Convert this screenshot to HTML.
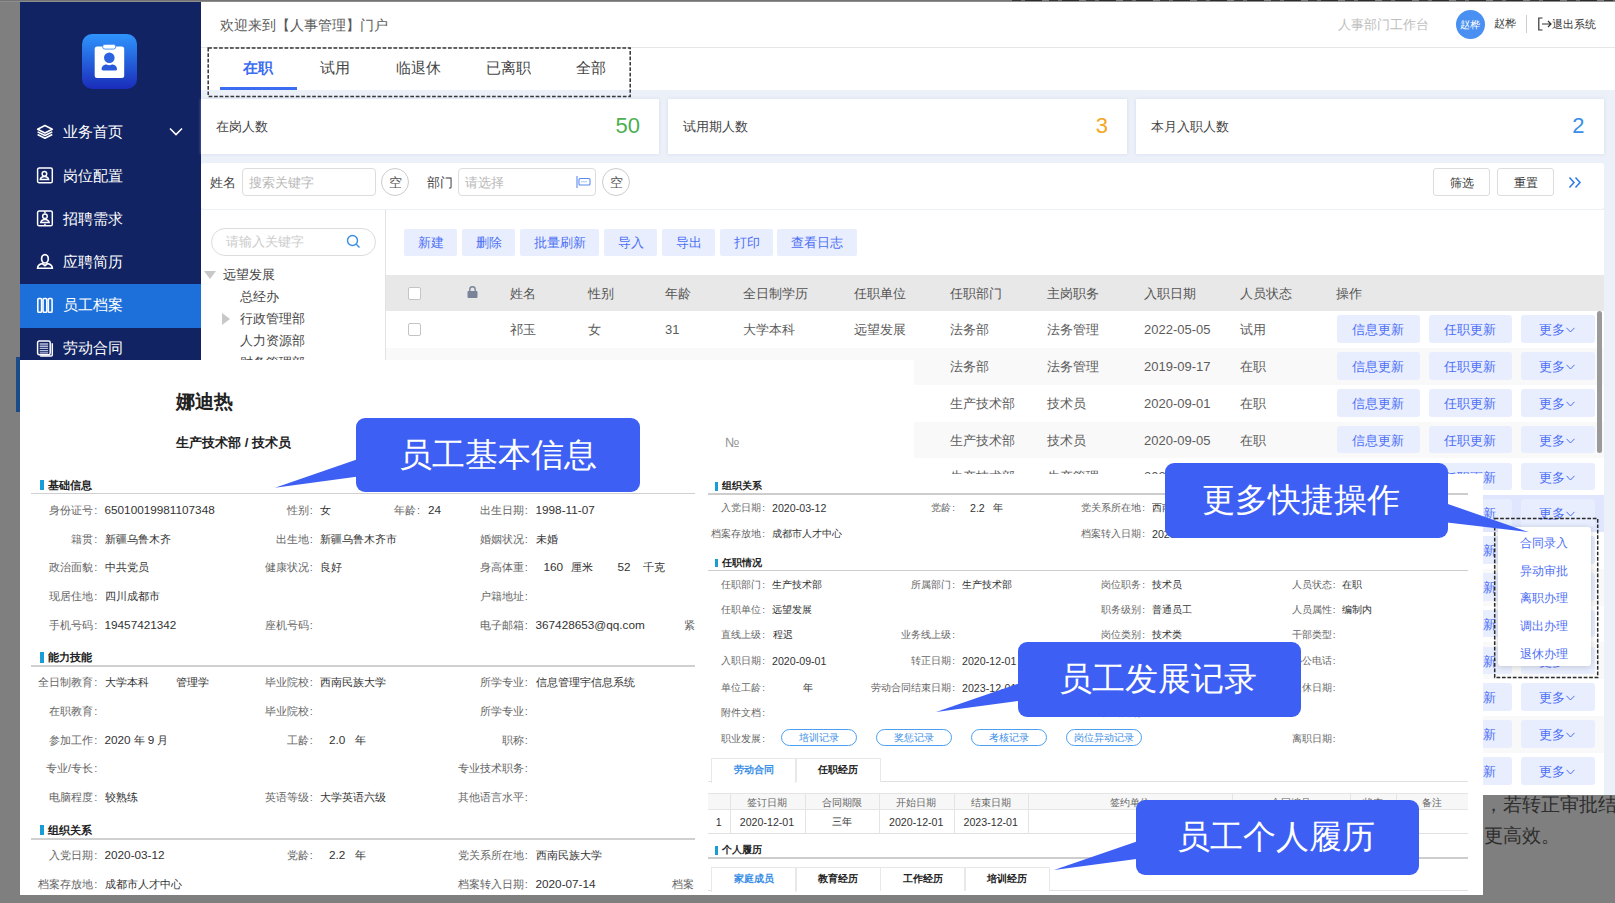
<!DOCTYPE html>
<html><head><meta charset="utf-8"><title>HR</title>
<style>
*{box-sizing:border-box;margin:0;padding:0}
html,body{width:1615px;height:903px;overflow:hidden;background:#7f7f7f}
body{position:relative;font-family:"Liberation Sans",sans-serif;font-size:13px;color:#555}
.a{position:absolute;white-space:nowrap}
.side{left:20px;top:2px;width:181px;height:358px;background:#112362}
.mi{left:0;width:181px;height:44px;color:#fff;font-size:15px;line-height:44px}
.mi span{position:absolute;left:43px;top:0}
.mi svg{position:absolute;left:16.400px;top:13.600px;width:17.900px;height:16.800px}
.main{left:201px;top:2px;width:1414px;height:793px;background:#ecf0f8}
.hdr{left:0;top:0;width:1414px;height:46px;background:#fff;border-bottom:1px solid #e6e6e6}
.tabs{left:0;top:46px;width:1414px;height:42px;background:#fff}
.tab{top:0;height:40px;line-height:40px;font-size:15px;color:#444}
.card{top:96.500px;height:55.500px;background:#fff;box-shadow:0 0 3px rgba(190,200,230,.55)}
.card .l{left:15px;top:0;line-height:56px;font-size:12.800px;color:#444}
.card .n{top:0;line-height:54px;font-size:22px;text-align:right}
.filter{left:0;top:161px;width:1402.500px;height:45.500px;border-radius:3px;background:#fff;font-size:13px}
.inp{border:1px solid #dcdcdc;border-radius:4px;height:28px;line-height:27px;color:#b8b8b8;padding-left:6px;font-size:12.800px;background:#fff}
.circ{width:28px;height:28px;border:1px solid #ccc;border-radius:50%;text-align:center;line-height:28px;font-size:13px;color:#555}
.btnw{height:28px;line-height:28px;border:1px solid #dcdcdc;border-radius:3px;text-align:center;color:#333;font-size:12px;background:#fff}
.tree{left:0;top:207.800px;width:184px;height:151px;background:#fff;overflow:hidden;font-size:13px;color:#444}
.grid{left:184px;top:207.800px;width:1218.500px;height:585.200px;background:#fff;overflow:hidden;border-left:1px solid #e2e2e2}
.tb{top:19.200px;height:27px;line-height:27px;background:#e8eefe;color:#4d6ef5;font-size:13px;text-align:center;border-radius:2px}
.th{left:0;top:65.200px;width:1218px;height:36px;background:#e8e8e8;color:#555}
.th span,.tr span{position:absolute;top:0;line-height:37px;white-space:nowrap}
.tr{left:0;width:1218px;height:37px;color:#5c5c5c}
.ab{position:absolute;top:4.200px;height:27.500px;line-height:29px;padding-right:2px;background:#e8eefe;color:#4d6ef5;font-size:13px;text-align:center;border-radius:3px}
.cb{position:absolute;left:22px;top:12px;width:13px;height:13px;border:1px solid #c4c4c4;border-radius:2px;background:#fff}
</style></head>
<body>
<div class="a" style="left:0;top:0;width:1615px;height:1px;background:#747474"></div>
<div class="a" style="left:0;top:1px;width:1615px;height:1px;background:#8c8c8c"></div>
<div class="a" style="left:1012px;top:0;width:603px;height:1px;background:repeating-linear-gradient(90deg,#333 0 9px,#666 9px 13px,#2a2a2a 13px 30px,#777 30px 37px)"></div>
<div class="a side">
<div class="a" style="left:62px;top:32px;width:55px;height:55.400px;border-radius:10px;background:linear-gradient(#2f94fc,#1a2cba)"><svg width="55" height="55" viewBox="0 0 55 55"><rect x="12.700" y="12.400" width="29.500" height="31.600" rx="2.500" fill="#fff"/><rect x="20.600" y="10.300" width="13.200" height="4.800" rx="2.400" fill="#fff" stroke="#3a8af6" stroke-width=".9"/><circle cx="27.300" cy="23.800" r="5.300" fill="#2a62e0"/><path d="M19.600 35.200c0-3.300 3-4.600 5-4.600 1.500.9 3.900.9 5.400 0 2 0 5 1.300 5 4.600 0 .8-.6 1.200-1.300 1.200H20.900c-.7 0-1.300-.4-1.300-1.200z" fill="#2a5adc"/></svg></div>
<div class="a mi" style="top:108.0px;height:44px;"><svg width="17" height="16" viewBox="0 0 17 16" fill="none" stroke="#fff" stroke-width="1.5" stroke-linejoin="round"><path d="M8.500 1.500 15.500 5 8.500 8.500 1.500 5z"/><path d="M1.500 7.500 8.500 11l7-3.500M1.500 10 8.500 13.500l7-3.500"/></svg><span>业务首页</span></div>
<div class="a mi" style="top:151.7px;height:44px;"><svg width="17" height="16" viewBox="0 0 17 16" fill="none" stroke="#fff" stroke-width="1.400"><rect x="1.500" y="1" width="14" height="14" rx="1.500"/><circle cx="8" cy="6.500" r="2.200"/><path d="M4 12c.5-2.500 2-3 4-3s3.500.5 4 3z"/></svg><span>岗位配置</span></div>
<div class="a mi" style="top:194.6px;height:44px;"><svg width="17" height="16" viewBox="0 0 17 16" fill="none" stroke="#fff" stroke-width="1.400"><rect x="1.500" y="1" width="14" height="14" rx="1.500"/><circle cx="8.500" cy="6" r="2.200"/><path d="M4.500 12c.5-2.500 2-3 4-3s3.500.5 4 3zM8.500 1v2M8.500 13v2"/></svg><span>招聘需求</span></div>
<div class="a mi" style="top:237.8px;height:44px;"><svg width="17" height="16" viewBox="0 0 17 16" fill="none" stroke="#fff" stroke-width="1.600"><ellipse cx="8.500" cy="5.500" rx="3.200" ry="4"/><path d="M1.500 14.500c0-3 2.500-4 4.500-4.500l2.500 2 2.500-2c2 .5 4.500 1.500 4.500 4.500z"/></svg><span>应聘简历</span></div>
<div class="a mi" style="top:282.2px;height:44px;background:#1d6fda;line-height:42px;"><svg style="top:12.600px" width="17" height="16" viewBox="0 0 17 16" fill="none" stroke="#fff" stroke-width="1.500"><rect x="1.700" y="1.500" width="3.600" height="13" rx="1"/><rect x="6.700" y="1.500" width="3.600" height="13" rx="1"/><rect x="11.700" y="1.500" width="3.600" height="13" rx="1"/></svg><span>员工档案</span></div>
<div class="a mi" style="top:324.4px;height:34px;"><svg width="17" height="16" viewBox="0 0 17 16" fill="none" stroke="#fff" stroke-width="1.400"><rect x="1.500" y="1" width="12" height="13" rx="1.500"/><path d="M4 15.200h10.500a1 1 0 0 0 1-1V3"/><path d="M3.500 3.800h8M3.500 5.900h8M3.500 8h8M3.500 10.100h8M3.500 12.200h8" stroke-width="1.300" stroke="#b9bedd"/></svg><span>劳动合同</span></div>
<svg class="a" style="left:149px;top:125px" width="14" height="9" viewBox="0 0 14 9" fill="none" stroke="#fff" stroke-width="1.600"><path d="M1 1.500 7 7.500 13 1.500"/></svg>
</div>
<div class="a" style="left:16px;top:357px;width:4px;height:55px;background:#1a4a87"></div>
<div class="a main">
<div class="a hdr"><div class="a" style="left:19px;top:0;line-height:47px;font-size:14.450px;color:#5a5a5a">欢迎来到【人事管理】门户</div><div class="a" style="left:1137px;top:0;line-height:45px;font-size:13px;color:#bdbdbd">人事部门工作台</div><div class="a" style="left:1254.500px;top:7.500px;width:29px;height:29px;border-radius:50%;background:#4a90f2;color:#fff;font-size:10px;line-height:29px;text-align:center">赵桦</div><div class="a" style="left:1293px;top:0;line-height:43px;font-size:11px;color:#444">赵桦</div><div class="a" style="left:1325px;top:13px;width:1px;height:18px;background:#ccc"></div><svg class="a" style="left:1336px;top:15px" width="16" height="14" viewBox="0 0 16 14" fill="none" stroke="#333" stroke-width="1.200"><path d="M5.500 1H1.800v12H5.500M5 7h9M11 4l3 3-3 3"/></svg><div class="a" style="left:1351px;top:0;line-height:45px;font-size:11px;color:#333">退出系统</div></div>
<div class="a tabs"><div class="a tab" style="left:42px;color:#3c6df0;font-weight:bold;">在职</div><div class="a tab" style="left:119px;">试用</div><div class="a tab" style="left:195px;">临退休</div><div class="a tab" style="left:285px;">已离职</div><div class="a tab" style="left:375px;">全部</div><div class="a" style="left:19px;top:39px;width:77px;height:3px;background:#3c6df0"></div></div>
<svg class="a" style="left:5px;top:43px" width="430" height="56"><rect x="2.200" y="2.900" width="422" height="48.500" fill="none" stroke="#333" stroke-width="1.500" stroke-dasharray="3.700 1.750"/></svg>
<div class="a card" style="left:0px;width:458px"><div class="a l">在岗人数</div><div class="a n" style="right:19px;color:#4caf50">50</div></div>
<div class="a card" style="left:467px;width:459px"><div class="a l">试用期人数</div><div class="a n" style="right:19px;color:#f5a623">3</div></div>
<div class="a card" style="left:935px;width:467.5px"><div class="a l">本月入职人数</div><div class="a n" style="right:19px;color:#3a8ee6">2</div></div>
<div class="a filter"><div class="a" style="left:9px;top:-1px;line-height:41px;color:#444">姓名</div><div class="a inp" style="left:41px;top:5px;width:134px">搜索关键字</div><div class="a circ" style="left:180px;top:5px">空</div><div class="a" style="left:226px;top:-1px;line-height:41px;color:#444">部门</div><div class="a inp" style="left:257px;top:5px;width:138px">请选择</div><svg class="a" style="left:375px;top:13px" width="15" height="12" viewBox="0 0 15 12" fill="none" stroke="#5b8cf0" stroke-width="1.100"><path d="M1 0v12"/><rect x="3" y="2.500" width="11" height="6.500" rx="1"/><path d="M5.500 5.800h6" stroke-dasharray="1 1"/></svg><div class="a circ" style="left:401px;top:5px">空</div><div class="a btnw" style="left:1232px;top:5px;width:57px">筛选</div><div class="a btnw" style="left:1296px;top:5px;width:57px">重置</div><svg class="a" style="left:1367px;top:12.500px" width="14" height="13" viewBox="0 0 14 13" fill="none" stroke="#2e7be6" stroke-width="1.500"><path d="M1.500 1.500 6 6.500 1.500 11.500M7.500 1.500 12 6.500 7.500 11.500"/></svg></div>
<div class="a tree"><div class="a" style="left:10px;top:18.200px;width:165px;height:28px;border:1px solid #dcdcdc;border-radius:14px;line-height:25px;padding-left:14px;font-size:12.800px;color:#ccc">请输入关键字</div><svg class="a" style="left:145px;top:24.500px" width="15" height="15" viewBox="0 0 15 15" fill="none" stroke="#3a8ee6" stroke-width="1.400"><circle cx="6.500" cy="6.500" r="5"/><path d="M10.200 10.200 13.500 13.500"/></svg><div class="a" style="left:2.500px;top:61.500px;border:6.400px solid transparent;border-top:8px solid #c8c8c8;border-bottom:0"></div><div class="a" style="left:22px;top:54.500px;line-height:22px">远望发展</div><div class="a" style="left:39px;top:76.400px;line-height:22px">总经办</div><div class="a" style="left:21px;top:103.200px;border:6.300px solid transparent;border-left:8.400px solid #c8c8c8;border-right:0"></div><div class="a" style="left:39px;top:98.500px;line-height:22px">行政管理部</div><div class="a" style="left:39px;top:120.600px;line-height:22px">人力资源部</div><div class="a" style="left:39px;top:142.700px;line-height:22px">财务管理部</div></div>
<div class="a grid"><div class="a tb" style="left:18px;width:53px">新建</div><div class="a tb" style="left:76px;width:53px">删除</div><div class="a tb" style="left:134px;width:79px">批量刷新</div><div class="a tb" style="left:218px;width:53px">导入</div><div class="a tb" style="left:276px;width:53px">导出</div><div class="a tb" style="left:334px;width:53px">打印</div><div class="a tb" style="left:391px;width:80px">查看日志</div><div class="a th"><i class="cb" style="top:12px"></i><svg class="a" style="left:81px;top:11px" width="11" height="12" viewBox="0 0 11 12"><rect x="0.500" y="5" width="10" height="7" rx="1" fill="#7a8499"/><path d="M2.800 5V3.500a2.700 2.700 0 0 1 5.400 0V5" fill="none" stroke="#7a8499" stroke-width="1.400"/></svg><span style="left:124px">姓名</span><span style="left:202px">性别</span><span style="left:279px">年龄</span><span style="left:357px">全日制学历</span><span style="left:468px">任职单位</span><span style="left:564px">任职部门</span><span style="left:661px">主岗职务</span><span style="left:758px">入职日期</span><span style="left:854px">人员状态</span><span style="left:950px">操作</span></div>
<div class="a tr" style="top:101.5px;background:#fff"><i class="cb"></i><span style="left:124px">祁玉</span><span style="left:202px">女</span><span style="left:279px">31</span><span style="left:357px">大学本科</span><span style="left:468px">远望发展</span><span style="left:564px">法务部</span><span style="left:661px">法务管理</span><span style="left:758px">2022-05-05</span><span style="left:854px">试用</span><div class="ab" style="left:951px;width:83px">信息更新</div><div class="ab" style="left:1043px;width:83px">任职更新</div><div class="ab" style="left:1135px;width:74px">更多<svg width="9" height="6" viewBox="0 0 9 6" fill="none" stroke="#4d6ef5" stroke-width="1" style="margin-left:1px;vertical-align:1px"><path d="M.5.800 4.500 5 8.500.8"/></svg></div></div>
<div class="a tr" style="top:138.3px;background:#f9f9f9"><span style="left:564px">法务部</span><span style="left:661px">法务管理</span><span style="left:758px">2019-09-17</span><span style="left:854px">在职</span><div class="ab" style="left:951px;width:83px">信息更新</div><div class="ab" style="left:1043px;width:83px">任职更新</div><div class="ab" style="left:1135px;width:74px">更多<svg width="9" height="6" viewBox="0 0 9 6" fill="none" stroke="#4d6ef5" stroke-width="1" style="margin-left:1px;vertical-align:1px"><path d="M.5.800 4.500 5 8.500.8"/></svg></div></div>
<div class="a tr" style="top:175.1px;background:#fff"><span style="left:564px">生产技术部</span><span style="left:661px">技术员</span><span style="left:758px">2020-09-01</span><span style="left:854px">在职</span><div class="ab" style="left:951px;width:83px">信息更新</div><div class="ab" style="left:1043px;width:83px">任职更新</div><div class="ab" style="left:1135px;width:74px">更多<svg width="9" height="6" viewBox="0 0 9 6" fill="none" stroke="#4d6ef5" stroke-width="1" style="margin-left:1px;vertical-align:1px"><path d="M.5.800 4.500 5 8.500.8"/></svg></div></div>
<div class="a tr" style="top:211.9px;background:#f9f9f9"><span style="left:564px">生产技术部</span><span style="left:661px">技术员</span><span style="left:758px">2020-09-05</span><span style="left:854px">在职</span><div class="ab" style="left:951px;width:83px">信息更新</div><div class="ab" style="left:1043px;width:83px">任职更新</div><div class="ab" style="left:1135px;width:74px">更多<svg width="9" height="6" viewBox="0 0 9 6" fill="none" stroke="#4d6ef5" stroke-width="1" style="margin-left:1px;vertical-align:1px"><path d="M.5.800 4.500 5 8.500.8"/></svg></div></div>
<div class="a tr" style="top:248.7px;background:#fff"><span style="left:564px">生产技术部</span><span style="left:661px">生产管理</span><span style="left:758px">2020-09-08</span><span style="left:854px">在职</span><div class="ab" style="left:951px;width:83px">信息更新</div><div class="ab" style="left:1043px;width:83px">任职更新</div><div class="ab" style="left:1135px;width:74px">更多<svg width="9" height="6" viewBox="0 0 9 6" fill="none" stroke="#4d6ef5" stroke-width="1" style="margin-left:1px;vertical-align:1px"><path d="M.5.800 4.500 5 8.500.8"/></svg></div></div>
<div class="a tr" style="top:285.5px;background:#dfe6fd"><div class="ab" style="left:951px;width:83px">信息更新</div><div class="ab" style="left:1043px;width:83px">任职更新</div><div class="ab" style="left:1135px;width:74px">更多<svg width="9" height="6" viewBox="0 0 9 6" fill="none" stroke="#4d6ef5" stroke-width="1" style="margin-left:1px;vertical-align:1px"><path d="M.5.800 4.500 5 8.500.8"/></svg></div></div>
<div class="a tr" style="top:322.3px;background:#fff"><div class="ab" style="left:951px;width:83px">信息更新</div><div class="ab" style="left:1043px;width:83px">任职更新</div><div class="ab" style="left:1135px;width:74px">更多<svg width="9" height="6" viewBox="0 0 9 6" fill="none" stroke="#4d6ef5" stroke-width="1" style="margin-left:1px;vertical-align:1px"><path d="M.5.800 4.500 5 8.500.8"/></svg></div></div>
<div class="a tr" style="top:359.1px;background:#f9f9f9"><div class="ab" style="left:951px;width:83px">信息更新</div><div class="ab" style="left:1043px;width:83px">任职更新</div><div class="ab" style="left:1135px;width:74px">更多<svg width="9" height="6" viewBox="0 0 9 6" fill="none" stroke="#4d6ef5" stroke-width="1" style="margin-left:1px;vertical-align:1px"><path d="M.5.800 4.500 5 8.500.8"/></svg></div></div>
<div class="a tr" style="top:395.9px;background:#fff"><div class="ab" style="left:951px;width:83px">信息更新</div><div class="ab" style="left:1043px;width:83px">任职更新</div><div class="ab" style="left:1135px;width:74px">更多<svg width="9" height="6" viewBox="0 0 9 6" fill="none" stroke="#4d6ef5" stroke-width="1" style="margin-left:1px;vertical-align:1px"><path d="M.5.800 4.500 5 8.500.8"/></svg></div></div>
<div class="a tr" style="top:432.7px;background:#f9f9f9"><div class="ab" style="left:951px;width:83px">信息更新</div><div class="ab" style="left:1043px;width:83px">任职更新</div><div class="ab" style="left:1135px;width:74px">更多<svg width="9" height="6" viewBox="0 0 9 6" fill="none" stroke="#4d6ef5" stroke-width="1" style="margin-left:1px;vertical-align:1px"><path d="M.5.800 4.500 5 8.500.8"/></svg></div></div>
<div class="a tr" style="top:469.5px;background:#fff"><div class="ab" style="left:951px;width:83px">信息更新</div><div class="ab" style="left:1043px;width:83px">任职更新</div><div class="ab" style="left:1135px;width:74px">更多<svg width="9" height="6" viewBox="0 0 9 6" fill="none" stroke="#4d6ef5" stroke-width="1" style="margin-left:1px;vertical-align:1px"><path d="M.5.800 4.500 5 8.500.8"/></svg></div></div>
<div class="a tr" style="top:506.3px;background:#f9f9f9"><div class="ab" style="left:951px;width:83px">信息更新</div><div class="ab" style="left:1043px;width:83px">任职更新</div><div class="ab" style="left:1135px;width:74px">更多<svg width="9" height="6" viewBox="0 0 9 6" fill="none" stroke="#4d6ef5" stroke-width="1" style="margin-left:1px;vertical-align:1px"><path d="M.5.800 4.500 5 8.500.8"/></svg></div></div>
<div class="a tr" style="top:543.1px;background:#fff"><div class="ab" style="left:951px;width:83px">信息更新</div><div class="ab" style="left:1043px;width:83px">任职更新</div><div class="ab" style="left:1135px;width:74px">更多<svg width="9" height="6" viewBox="0 0 9 6" fill="none" stroke="#4d6ef5" stroke-width="1" style="margin-left:1px;vertical-align:1px"><path d="M.5.800 4.500 5 8.500.8"/></svg></div></div>
<div class="a" style="left:1210.500px;top:101.700px;width:5px;height:142px;background:#9a9a9a;border-radius:3px"></div></div>
</div>
<div class="a" style="left:1484px;top:789.500px;font-size:18.700px;line-height:30px;color:#2e2e2e">，若转正审批结</div>
<div class="a" style="left:1484px;top:820.500px;font-size:18.700px;line-height:30px;color:#2e2e2e">更高效。</div>
<style>.doc{color:#333}.L .lb{position:absolute;white-space:nowrap;font-size:11px;color:#666;text-align:right;line-height:16px}.L .v{position:absolute;white-space:nowrap;font-size:11px;color:#333;line-height:16px}.L b{font-weight:normal;font-size:11.750px}.R .lb{position:absolute;white-space:nowrap;font-size:9.800px;color:#666;text-align:right;line-height:14px}.R .v{position:absolute;white-space:nowrap;font-size:9.800px;color:#333;line-height:14px}.R b{font-weight:normal;font-size:10.650px}.lb i{font-style:normal;margin-left:1px}.sh{position:absolute;white-space:nowrap;font-weight:bold;color:#222}.bar{position:absolute;background:#1a9cd8}.ln{position:absolute;height:2px;background:#d0d0d0}.pill{position:absolute;height:17px;line-height:15px;border:1px solid #4a9ff0;border-radius:9px;color:#3a8ee6;font-size:9.500px;text-align:center;width:75.500px;top:728.800px}.tb2{position:absolute;height:24px;line-height:22px;font-size:10px;font-weight:bold;text-align:center;color:#222;border:1px solid #e8e8e8;border-bottom:0;background:#fff;width:85px}.tc{position:absolute;font-size:9.800px;text-align:center;white-space:nowrap}.tc b{font-weight:normal;font-size:10.650px}.call{position:absolute;background:#3d5ff4;border-radius:9px;color:#fff;font-size:32.500px;text-align:center;white-space:nowrap}</style>
<div class="a" style="left:20px;top:360px;width:894px;height:115px;background:#fff"></div>
<div class="a" style="left:20px;top:474px;width:1463.300px;height:421.300px;background:#fff"></div>
<div class="a doc L" style="left:0;top:0;width:700px;height:895px;overflow:hidden">
<div class="sh" style="left:176px;top:388px;font-size:19.300px;line-height:28px;color:#222">娜迪热</div><div class="sh" style="left:176px;top:433px;font-size:13.200px;line-height:20px;color:#222">生产技术部 / 技术员</div>
<div class="bar" style="left:40px;top:479.5px;width:3.500px;height:10.500px"></div><div class="sh" style="left:48px;top:476.5px;font-size:11.200px;line-height:16px">基础信息</div><div class="ln" style="left:31px;top:492.8px;width:664px;height:1.700px"></div>
<div class="lb" style="right:602.8px;top:502.0px">身份证号<i>:</i></div><div class="v" style="left:104.5px;top:502.0px"><b>65010019981107348</b></div><div class="lb" style="right:387.3px;top:502.0px">性别<i>:</i></div><div class="v" style="left:320.0px;top:502.0px">女</div><div class="lb" style="right:280.0px;top:502.0px">年龄<i>:</i></div><div class="v" style="left:428.0px;top:502.0px"><b>24</b></div><div class="lb" style="right:172.3px;top:502.0px">出生日期<i>:</i></div><div class="v" style="left:535.5px;top:502.0px"><b>1998-11-07</b></div><div class="lb" style="right:602.8px;top:530.5px">籍贯<i>:</i></div><div class="v" style="left:104.5px;top:530.5px">新疆乌鲁木齐</div><div class="lb" style="right:387.3px;top:530.5px">出生地<i>:</i></div><div class="v" style="left:320.0px;top:530.5px">新疆乌鲁木齐市</div><div class="lb" style="right:172.3px;top:530.5px">婚姻状况<i>:</i></div><div class="v" style="left:535.5px;top:530.5px">未婚</div><div class="lb" style="right:602.8px;top:559.2px">政治面貌<i>:</i></div><div class="v" style="left:104.5px;top:559.2px">中共党员</div><div class="lb" style="right:387.3px;top:559.2px">健康状况<i>:</i></div><div class="v" style="left:320.0px;top:559.2px">良好</div><div class="lb" style="right:172.3px;top:559.2px">身高体重<i>:</i></div><div class="v" style="left:543.5px;top:559.2px"><b>160</b></div><div class="v" style="left:570.5px;top:559.2px">厘米</div><div class="v" style="left:617.5px;top:559.2px"><b>52</b></div><div class="v" style="left:642.5px;top:559.2px">千克</div><div class="lb" style="right:602.8px;top:587.9px">现居住地<i>:</i></div><div class="v" style="left:104.5px;top:587.9px">四川成都市</div><div class="lb" style="right:172.3px;top:587.9px">户籍地址<i>:</i></div><div class="lb" style="right:602.8px;top:616.6px">手机号码<i>:</i></div><div class="v" style="left:104.5px;top:616.6px"><b>19457421342</b></div><div class="lb" style="right:387.3px;top:616.6px">座机号码<i>:</i></div><div class="lb" style="right:172.3px;top:616.6px">电子邮箱<i>:</i></div><div class="v" style="left:535.5px;top:616.6px"><b>367428653@qq.com</b></div><div class="lb" style="left:683.500px;top:616.6px">紧</div>
<div class="bar" style="left:40px;top:652.0px;width:3.500px;height:10.500px"></div><div class="sh" style="left:48px;top:649.0px;font-size:11.200px;line-height:16px">能力技能</div><div class="ln" style="left:31px;top:665.3px;width:664px;height:1.700px"></div>
<div class="lb" style="right:602.8px;top:674.3px">全日制教育<i>:</i></div><div class="v" style="left:104.5px;top:674.3px">大学本科</div><div class="v" style="left:176.0px;top:674.3px">管理学</div><div class="lb" style="right:387.3px;top:674.3px">毕业院校<i>:</i></div><div class="v" style="left:320.0px;top:674.3px">西南民族大学</div><div class="lb" style="right:172.3px;top:674.3px">所学专业<i>:</i></div><div class="v" style="left:535.5px;top:674.3px">信息管理宇信息系统</div><div class="lb" style="right:602.8px;top:703.0px">在职教育<i>:</i></div><div class="lb" style="right:387.3px;top:703.0px">毕业院校<i>:</i></div><div class="lb" style="right:172.3px;top:703.0px">所学专业<i>:</i></div><div class="lb" style="right:602.8px;top:731.6px">参加工作<i>:</i></div><div class="v" style="left:104.5px;top:731.6px"><b>2020</b> 年 <b>9</b> 月</div><div class="lb" style="right:387.3px;top:731.6px">工龄<i>:</i></div><div class="v" style="left:329.0px;top:731.6px"><b>2.0</b></div><div class="v" style="left:355.0px;top:731.6px">年</div><div class="lb" style="right:172.3px;top:731.6px">职称<i>:</i></div><div class="lb" style="right:602.8px;top:760.3px">专业/专长<i>:</i></div><div class="lb" style="right:172.3px;top:760.3px">专业技术职务<i>:</i></div><div class="lb" style="right:602.8px;top:789.0px">电脑程度<i>:</i></div><div class="v" style="left:104.5px;top:789.0px">较熟练</div><div class="lb" style="right:387.3px;top:789.0px">英语等级<i>:</i></div><div class="v" style="left:320.0px;top:789.0px">大学英语六级</div><div class="lb" style="right:172.3px;top:789.0px">其他语言水平<i>:</i></div>
<div class="bar" style="left:40px;top:824.7px;width:3.500px;height:10.500px"></div><div class="sh" style="left:48px;top:821.7px;font-size:11.200px;line-height:16px">组织关系</div><div class="ln" style="left:31px;top:838.0px;width:664px;height:1.700px"></div>
<div class="lb" style="right:602.8px;top:846.7px">入党日期<i>:</i></div><div class="v" style="left:104.5px;top:846.7px"><b>2020-03-12</b></div><div class="lb" style="right:387.3px;top:846.7px">党龄<i>:</i></div><div class="v" style="left:329.0px;top:846.7px"><b>2.2</b></div><div class="v" style="left:355.0px;top:846.7px">年</div><div class="lb" style="right:172.3px;top:846.7px">党关系所在地<i>:</i></div><div class="v" style="left:535.5px;top:846.7px">西南民族大学</div><div class="lb" style="right:602.8px;top:875.5px">档案存放地<i>:</i></div><div class="v" style="left:104.5px;top:875.5px">成都市人才中心</div><div class="lb" style="right:172.3px;top:875.5px">档案转入日期<i>:</i></div><div class="v" style="left:535.5px;top:875.5px"><b>2020-07-14</b></div><div class="lb" style="left:671.500px;top:875.5px">档案</div></div>
<div class="a doc R" style="left:0;top:0;width:1483px;height:895px;overflow:hidden">
<div class="a" style="left:725px;top:435px;font-size:13.500px;line-height:16px;color:#999">№</div>
<div class="bar" style="left:715px;top:482.0px;width:3px;height:8.500px"></div><div class="sh" style="left:721.500px;top:479.2px;font-size:9.800px;line-height:14px">组织关系</div><div class="ln" style="left:708px;top:493.1px;width:759.500px;height:1.800px;background:#cdcdcd"></div>
<div class="lb" style="right:718.0px;top:501.2px">入党日期<i>:</i></div><div class="v" style="left:772.0px;top:501.2px"><b>2020-03-12</b></div><div class="lb" style="right:528.0px;top:501.2px">党龄<i>:</i></div><div class="v" style="left:970.0px;top:501.2px"><b>2.2</b></div><div class="v" style="left:993.0px;top:501.2px">年</div><div class="lb" style="right:338.0px;top:501.2px">党关系所在地<i>:</i></div><div class="v" style="left:1152.0px;top:501.2px">西南民族大学</div><div class="lb" style="right:718.0px;top:526.9px">档案存放地<i>:</i></div><div class="v" style="left:772.0px;top:526.9px">成都市人才中心</div><div class="lb" style="right:338.0px;top:526.9px">档案转入日期<i>:</i></div><div class="v" style="left:1152.0px;top:526.9px"><b>2020-07-14</b></div><div class="bar" style="left:715px;top:558.5px;width:3px;height:8.500px"></div><div class="sh" style="left:721.500px;top:555.7px;font-size:9.800px;line-height:14px">任职情况</div><div class="ln" style="left:708px;top:569.6px;width:759.500px;height:1.800px;background:#cdcdcd"></div>
<div class="lb" style="right:718.0px;top:577.5px">任职部门<i>:</i></div><div class="v" style="left:772.0px;top:577.5px">生产技术部</div><div class="lb" style="right:528.0px;top:577.5px">所属部门<i>:</i></div><div class="v" style="left:962.0px;top:577.5px">生产技术部</div><div class="lb" style="right:338.0px;top:577.5px">岗位职务<i>:</i></div><div class="v" style="left:1152.0px;top:577.5px">技术员</div><div class="lb" style="right:147.5px;top:577.5px">人员状态<i>:</i></div><div class="v" style="left:1342.0px;top:577.5px">在职</div><div class="lb" style="right:718.0px;top:602.9px">任职单位<i>:</i></div><div class="v" style="left:772.0px;top:602.9px">远望发展</div><div class="lb" style="right:338.0px;top:602.9px">职务级别<i>:</i></div><div class="v" style="left:1152.0px;top:602.9px">普通员工</div><div class="lb" style="right:147.5px;top:602.9px">人员属性<i>:</i></div><div class="v" style="left:1342.0px;top:602.9px">编制内</div><div class="lb" style="right:718.0px;top:628.0px">直线上级<i>:</i></div><div class="v" style="left:773.0px;top:628.0px">程迟</div><div class="lb" style="right:528.0px;top:628.0px">业务线上级<i>:</i></div><div class="lb" style="right:338.0px;top:628.0px">岗位类别<i>:</i></div><div class="v" style="left:1152.0px;top:628.0px">技术类</div><div class="lb" style="right:147.5px;top:628.0px">干部类型<i>:</i></div><div class="lb" style="right:718.0px;top:653.9px">入职日期<i>:</i></div><div class="v" style="left:772.0px;top:653.9px"><b>2020-09-01</b></div><div class="lb" style="right:528.0px;top:653.9px">转正日期<i>:</i></div><div class="v" style="left:962.0px;top:653.9px"><b>2020-12-01</b></div><div class="lb" style="right:147.5px;top:653.9px">办公电话<i>:</i></div><div class="lb" style="right:718.0px;top:680.8px">单位工龄<i>:</i></div><div class="v" style="left:803.0px;top:680.8px">年</div><div class="lb" style="right:528.0px;top:680.8px">劳动合同结束日期<i>:</i></div><div class="v" style="left:962.0px;top:680.8px"><b>2023-12-01</b></div><div class="lb" style="right:147.5px;top:680.8px">退休日期<i>:</i></div><div class="lb" style="right:718.0px;top:706.2px">附件文档<i>:</i></div><div class="lb" style="right:338.0px;top:706.2px">在编类别<i>:</i></div><div class="lb" style="right:718.0px;top:731.7px">职业发展<i>:</i></div><div class="lb" style="right:147.5px;top:731.7px">离职日期<i>:</i></div><div class="pill" style="left:781px">培训记录</div><div class="pill" style="left:876px">奖惩记录</div><div class="pill" style="left:971px">考核记录</div><div class="pill" style="left:1066px">岗位异动记录</div>
<div class="ln" style="left:708px;top:781px;width:759.500px;height:1px;background:#e0e0e0"></div><div class="tb2" style="left:711px;top:757.500px;color:#3a8ee6;height:25px">劳动合同</div><div class="tb2" style="left:795.500px;top:757.500px">任职经历</div>
<div class="a" style="left:708px;top:792.700px;width:759.500px;height:17.300px;background:#f7f7f7;border-top:1px solid #e4e4e4;border-bottom:1px solid #e4e4e4"></div><div class="a" style="left:708px;top:833px;width:759.500px;height:1px;background:#e0e0e0"></div><div class="a" style="left:729.5px;top:793.500px;width:1px;height:40px;background:#e4e4e4"></div><div class="a" style="left:804.5px;top:793.500px;width:1px;height:40px;background:#e4e4e4"></div><div class="a" style="left:879.0px;top:793.500px;width:1px;height:40px;background:#e4e4e4"></div><div class="a" style="left:953.5px;top:793.500px;width:1px;height:40px;background:#e4e4e4"></div><div class="a" style="left:1028.0px;top:793.500px;width:1px;height:40px;background:#e4e4e4"></div><div class="a" style="left:1231.5px;top:793.500px;width:1px;height:40px;background:#e4e4e4"></div><div class="a" style="left:1350.0px;top:793.500px;width:1px;height:40px;background:#e4e4e4"></div><div class="a" style="left:1395.5px;top:793.500px;width:1px;height:40px;background:#e4e4e4"></div><div class="tc" style="left:729.5px;width:75.0px;top:794.500px;line-height:15px;color:#666">签订日期</div><div class="tc" style="left:804.5px;width:74.5px;top:794.500px;line-height:15px;color:#666">合同期限</div><div class="tc" style="left:879.0px;width:74.5px;top:794.500px;line-height:15px;color:#666">开始日期</div><div class="tc" style="left:953.5px;width:74.5px;top:794.500px;line-height:15px;color:#666">结束日期</div><div class="tc" style="left:1028.0px;width:203.5px;top:794.500px;line-height:15px;color:#666">签约单位</div><div class="tc" style="left:1231.5px;width:118.5px;top:794.500px;line-height:15px;color:#666">合同编号</div><div class="tc" style="left:1350.0px;width:45.5px;top:794.500px;line-height:15px;color:#666">状态</div><div class="tc" style="left:1395.5px;width:72.5px;top:794.500px;line-height:15px;color:#666">备注</div><div class="tc" style="left:708.0px;width:21.5px;top:813.500px;line-height:16px;color:#333"><b>1</b></div><div class="tc" style="left:729.5px;width:75.0px;top:813.500px;line-height:16px;color:#333"><b>2020-12-01</b></div><div class="tc" style="left:804.5px;width:74.5px;top:813.500px;line-height:16px;color:#333">三年</div><div class="tc" style="left:879.0px;width:74.5px;top:813.500px;line-height:16px;color:#333"><b>2020-12-01</b></div><div class="tc" style="left:953.5px;width:74.5px;top:813.500px;line-height:16px;color:#333"><b>2023-12-01</b></div>
<div class="bar" style="left:715px;top:846.2px;width:3px;height:8.500px"></div><div class="sh" style="left:721.500px;top:843.4px;font-size:9.800px;line-height:14px">个人履历</div><div class="ln" style="left:708px;top:857.3px;width:759.500px;height:1.800px;background:#cdcdcd"></div>
<div class="ln" style="left:708px;top:889.500px;width:759.500px;height:1px;background:#e0e0e0"></div><div class="tb2" style="left:711.0px;top:866.500px;color:#3a8ee6;height:25px;">家庭成员</div><div class="tb2" style="left:795.5px;top:866.500px;">教育经历</div><div class="tb2" style="left:880.0px;top:866.500px;">工作经历</div><div class="tb2" style="left:964.5px;top:866.500px;">培训经历</div></div>
<div class="a" style="left:1498px;top:527px;width:93px;height:139px;background:#fff;border-radius:3px;box-shadow:0 1px 6px rgba(0,0,0,.18)"></div>
<div class="a" style="left:1498px;width:93px;top:533.7px;line-height:18px;text-align:center;font-size:12.200px;color:#4d6ef5;padding-right:2px">合同录入</div><div class="a" style="left:1498px;width:93px;top:561.5px;line-height:18px;text-align:center;font-size:12.200px;color:#4d6ef5;padding-right:2px">异动审批</div><div class="a" style="left:1498px;width:93px;top:589.3px;line-height:18px;text-align:center;font-size:12.200px;color:#4d6ef5;padding-right:2px">离职办理</div><div class="a" style="left:1498px;width:93px;top:617.1px;line-height:18px;text-align:center;font-size:12.200px;color:#4d6ef5;padding-right:2px">调出办理</div><div class="a" style="left:1498px;width:93px;top:644.9px;line-height:18px;text-align:center;font-size:12.200px;color:#4d6ef5;padding-right:2px">退休办理</div><svg class="a" style="left:1490px;top:514px" width="112" height="168"><rect x="4.700" y="4.400" width="103" height="159.200" fill="none" stroke="#2a2a2a" stroke-width="1.500" stroke-dasharray="3.700 1.750"/></svg>
<div class="call" style="left:356.0px;top:418.0px;width:284.0px;height:74.3px;line-height:74.3px;padding-right:1.0px">员工基本信息</div><svg class="a" style="left:273.8px;top:457.8px" width="85.2" height="30.8"><polygon fill="#3d5ff4" points="84.2,1.0 84.2,18.4 1.0,29.8"/></svg>
<div class="call" style="left:1164.5px;top:463.0px;width:283.0px;height:74.5px;line-height:74.5px;padding-right:9.5px">更多快捷操作</div><svg class="a" style="left:1444.0px;top:501.8px" width="86.0" height="31.2"><polygon fill="#3d5ff4" points="1.0,1.0 1.0,20.2 85.0,30.2"/></svg>
<div class="call" style="left:1018.0px;top:641.8px;width:283.0px;height:74.8px;line-height:74.8px;padding-right:4.0px">员工发展记录</div><svg class="a" style="left:935.0px;top:681.6px" width="86.0" height="31.0"><polygon fill="#3d5ff4" points="85.0,1.0 85.0,18.7 1.0,30.0"/></svg>
<div class="call" style="left:1136.0px;top:800.0px;width:283.0px;height:74.8px;line-height:74.8px;padding-right:3.5px">员工个人履历</div><svg class="a" style="left:1052.8px;top:839.6px" width="86.2" height="30.9"><polygon fill="#3d5ff4" points="85.2,1.0 85.2,18.7 1.0,29.9"/></svg>

</body></html>
